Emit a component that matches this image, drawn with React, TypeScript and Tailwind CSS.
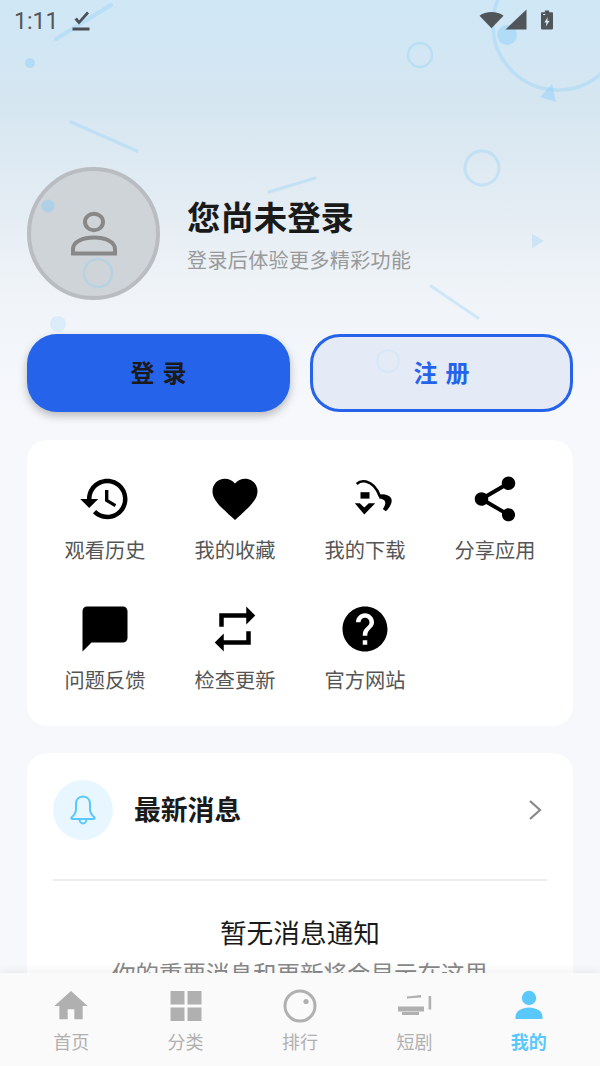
import React from 'react';

const CJK = { fontFamily: '"Noto Sans CJK SC", "Noto Sans", sans-serif' };

function MdIcon({ d }: { d: string }) {
    return (
        <svg viewBox="0 0 24 24" className="w-[54px] h-[54px]" fill="#000">
            <path d={d} />
        </svg>
    );
}

function DownloadIcon() {
    return (
        <svg viewBox="0 0 54 54" className="w-[54px] h-[54px]" fill="#000">
            <path d="M18.7 12C21 9.8 24.6 8.8 28 9.6C33 10.8 38.5 15 42 24.5" fill="none" stroke="#000" strokeWidth="2.6" />
            <path d="M40.5 22.8C45 21.6 50.5 22.4 53 26C55 29.4 52.5 35.2 47.8 39.2L44.8 37C47.4 33.5 48 30 46.4 28.6C45 27.2 43 26.6 41.5 26.8Z" />
            <rect x="22.5" y="20.2" width="9" height="6.4" />
            <path d="M16.8 31.2H21.8L26.3 35.6L30.8 31.2H37.2L26.3 42.6Z" />
        </svg>
    );
}

const gridItems: { label: string; icon: React.ReactNode }[] = [
    {
        label: '观看历史',
        icon: <MdIcon d="M13 3c-4.97 0-9 4.03-9 9H1l3.89 3.89.07.14L9 12H6c0-3.87 3.13-7 7-7s7 3.13 7 7-3.13 7-7 7c-1.93 0-3.68-.79-4.94-2.06l-1.42 1.42C8.27 19.99 10.51 21 13 21c4.97 0 9-4.03 9-9s-4.03-9-9-9zm-1 5v5l4.28 2.54.72-1.21-3.5-2.08V8H12z" />,
    },
    {
        label: '我的收藏',
        icon: <MdIcon d="M12 21.35l-1.45-1.32C5.4 15.36 2 12.28 2 8.5 2 5.42 4.42 3 7.5 3c1.74 0 3.41.81 4.5 2.09C13.09 3.81 14.76 3 16.5 3 19.58 3 22 5.42 22 8.5c0 3.78-3.4 6.86-8.55 11.54L12 21.35z" />,
    },
    { label: '我的下载', icon: <DownloadIcon /> },
    {
        label: '分享应用',
        icon: <MdIcon d="M18 16.08c-.76 0-1.44.3-1.96.77L8.91 12.7c.05-.23.09-.46.09-.7s-.04-.47-.09-.7l7.05-4.11c.54.5 1.25.81 2.04.81 1.66 0 3-1.34 3-3s-1.34-3-3-3-3 1.34-3 3c0 .24.04.47.09.7L8.04 9.81C7.5 9.31 6.79 9 6 9c-1.66 0-3 1.34-3 3s1.34 3 3 3c.79 0 1.5-.31 2.04-.81l7.12 4.16c-.05.21-.08.43-.08.65 0 1.61 1.31 2.92 2.92 2.92 1.61 0 2.92-1.31 2.92-2.92s-1.31-2.92-2.92-2.92z" />,
    },
    {
        label: '问题反馈',
        icon: <MdIcon d="M20 2H4c-1.1 0-1.99.9-1.99 2L2 22l4-4h14c1.1 0 2-.9 2-2V4c0-1.1-.9-2-2-2z" />,
    },
    {
        label: '检查更新',
        icon: <MdIcon d="M7 7h10v3l4-4-4-4v3H5v6h2V7zm10 10H7v-3l-4 4 4 4v-3h12v-6h-2v4z" />,
    },
    {
        label: '官方网站',
        icon: <MdIcon d="M12 2C6.48 2 2 6.48 2 12s4.48 10 10 10 10-4.48 10-10S17.52 2 12 2zm1 17h-2v-2h2v2zm2.07-7.75l-.9.92C13.45 12.9 13 13.5 13 15h-2v-.5c0-1.1.45-2.1 1.17-2.83l1.24-1.26c.37-.36.59-.86.59-1.41 0-1.1-.9-2-2-2s-2 .9-2 2H8c0-2.21 1.79-4 4-4s4 1.79 4 4c0 .88-.36 1.68-.93 2.25z" />,
    },
];

const navItems: { label: string; active?: boolean; icon: React.ReactNode }[] = [
    {
        label: '首页',
        icon: (
            <svg viewBox="0 0 24 24" className="w-10 h-10" fill="#b0b0b0">
                <path d="M10 20v-6h4v6h5v-8h3L12 3 2 12h3v8z" />
            </svg>
        ),
    },
    {
        label: '分类',
        icon: (
            <svg viewBox="0 0 40 40" className="w-10 h-10" fill="#b0b0b0">
                <rect x="4.5" y="5" width="14" height="13.5" />
                <rect x="21.5" y="5" width="14" height="13.5" />
                <rect x="4.5" y="21.5" width="14" height="13.5" />
                <rect x="21.5" y="21.5" width="14" height="13.5" />
            </svg>
        ),
    },
    {
        label: '排行',
        icon: (
            <svg viewBox="0 0 40 40" className="w-10 h-10">
                <circle cx="20" cy="20" r="15" fill="none" stroke="#b0b0b0" strokeWidth="3" />
                <circle cx="26" cy="15.5" r="2.6" fill="#b0b0b0" />
            </svg>
        ),
    },
    {
        label: '短剧',
        icon: (
            <svg viewBox="0 0 40 40" className="w-10 h-10" fill="#b0b0b0">
                <path d="M13 10.5L27 9V11.5L13 12.5Z" />
                <rect x="34.6" y="10" width="2.6" height="13.5" />
                <rect x="4" y="20.5" width="26" height="5" />
                <rect x="8" y="26" width="17" height="3" />
            </svg>
        ),
    },
    {
        label: '我的',
        active: true,
        icon: (
            <svg viewBox="0 0 40 40" className="w-10 h-10" fill="#5ac8fa">
                <circle cx="20" cy="12" r="7.2" />
                <path d="M6.5 33V31C6.5 25 13 21.5 20 21.5S33.5 25 33.5 31V33Z" />
            </svg>
        ),
    },
];

function Decorations() {
    return (
        <svg viewBox="0 0 600 400" className="absolute top-0 left-0 w-[600px] h-[400px] z-10 pointer-events-none" fill="none">
            <g stroke="#87cefa" strokeOpacity="0.32" strokeLinecap="round">
                <line x1="56" y1="39" x2="111" y2="5" strokeWidth="4" />
                <line x1="71" y1="122" x2="137" y2="151" strokeWidth="3.5" />
                <line x1="269" y1="192" x2="315" y2="178" strokeWidth="3" />
                <line x1="431" y1="286" x2="478" y2="318" strokeWidth="3" />
                <circle cx="420" cy="55" r="12" strokeWidth="2.5" />
                <circle cx="558" cy="25" r="65" strokeWidth="3.5" />
                <circle cx="482" cy="168" r="17" strokeWidth="3" />
                <circle cx="98" cy="273" r="14" strokeWidth="2.5" />
            </g>
            <circle cx="388" cy="361" r="11" stroke="#87cefa" strokeOpacity="0.12" strokeWidth="2" />
            <g fill="#87cefa" fillOpacity="0.45">
                <circle cx="30" cy="63" r="5" />
                <circle cx="507" cy="35" r="10" />
                <circle cx="48" cy="206" r="6.5" />
            </g>
            <circle cx="58" cy="324" r="8" fill="#87cefa" fillOpacity="0.2" />
            <path d="M552 84L540 97L556 102Z" fill="#87cefa" fillOpacity="0.42" />
            <path d="M532 234V248L544 241Z" fill="#87cefa" fillOpacity="0.3" />
        </svg>
    );
}

function StatusBar() {
    return (
        <div className="relative z-20 flex items-center justify-between h-[41px] pl-[14px] pr-[47px] text-[#555555]">
            <div className="flex items-center gap-[14px]">
                <span className="text-[23px] leading-none pt-[2px]" style={{ fontFamily: 'Roboto, sans-serif' }}>1:11</span>
                <svg viewBox="0 0 18 20" className="w-[18px] h-[20px]" fill="#4a4f55">
                    <path d="M2.5 8.5L5 6.5L7 9.5L15 0.5L17 2.5L7 13.5Z" />
                    <rect x="0.5" y="16.5" width="17" height="3" />
                </svg>
            </div>
            <div className="flex items-center gap-[1px] pb-[2px]">
                <svg viewBox="0 0 26 18" className="w-[25px] h-[18px]" fill="#50555a">
                    <path d="M0.5 4.5C7 -0.5 19 -0.5 25.5 4.5L13 17.5Z" />
                </svg>
                <svg viewBox="0 0 22 21" className="w-[22px] h-[21px]" fill="#50555a">
                    <path d="M21.5 0.5V20.5H0.5Z" />
                </svg>
                <svg viewBox="0 0 14 22" className="w-[12px] h-[22px] ml-[13px]" fill="#50555a">
                    <path d="M4.5 0H9.5V2H13C13.5 2 14 2.5 14 3V21C14 21.5 13.5 22 13 22H1C0.5 22 0 21.5 0 21V3C0 2.5 0.5 2 1 2H4.5Z" />
                    <path d="M7.8 7.5L4 14H6.4L5.6 19L10 11.8H7.4Z" fill="#dbeaf4" />
                    <rect x="2.5" y="4" width="2.5" height="1.2" fill="#dbeaf4" />
                </svg>
            </div>
        </div>
    );
}

export default function App() {
    return (
        <div
            className="relative w-[600px] h-[1066px] overflow-hidden bg-[linear-gradient(180deg,#cfe7f6_0px,#d5e6f1_100px,#e3ecf3_200px,#f0f4f8_300px,#f6f8fc_420px)]"
            style={CJK}
        >
            <StatusBar />
            <Decorations />

            <div className="flex items-center gap-[27px] pl-[27px] mt-[126px]">
                <div className="flex items-center justify-center w-[133px] h-[133px] rounded-full bg-[#cfd4d9] border-[4px] border-[#b9bdc1] shrink-0">
                    <svg viewBox="0 0 46 46" className="w-[46px] h-[46px]" fill="none" stroke="#888888" strokeWidth="4">
                        <ellipse cx="23" cy="11" rx="9" ry="8.3" />
                        <path d="M2 42.5V38C2 30.5 12 26.5 23 26.5S44 30.5 44 38V42.5Z" />
                    </svg>
                </div>
                <div className="flex flex-col">
                    <div className="text-[33.4px] leading-[42px] font-bold text-[#1a1a1a]">您尚未登录</div>
                    <div className="text-[20px] leading-[26px] tracking-[0.4px] text-[#999999] mt-[10px]">登录后体验更多精彩功能</div>
                </div>
            </div>

            <div className="flex justify-between px-[27px] mt-[34px]">
                <button className="w-[263px] h-[78px] pb-[3px] rounded-[30px] bg-[#2563eb] text-[24px] font-bold text-[#1a1a1a] tracking-[8px] shadow-[0_4px_8px_rgba(0,0,0,0.25)]">
                    <span className="pl-[8px]">登录</span>
                </button>
                <button className="w-[263px] h-[78px] pb-[3px] rounded-[30px] border-[3px] border-[#2563eb] bg-[#e4ebf7] text-[24px] font-bold text-[#2563eb] tracking-[8px]">
                    <span className="pl-[8px]">注册</span>
                </button>
            </div>

            <div className="mt-[28px] mx-[27px] bg-white rounded-[20px] h-[286px] px-[13px] pt-[32px] grid grid-cols-4 auto-rows-[130px]">
                {gridItems.map((item) => (
                    <div key={item.label} className="flex flex-col items-center">
                        {item.icon}
                        <span className="text-[20.2px] leading-[28px] text-[#555555] mt-[10px]">{item.label}</span>
                    </div>
                ))}
            </div>

            <div className="mt-[27px] mx-[27px] bg-white rounded-t-[20px] px-[26px] pt-[27px]">
                <div className="flex items-center h-[60px]">
                    <div className="flex items-center justify-center w-[60px] h-[60px] rounded-full bg-[#e8f7ff]">
                        <svg viewBox="0 0 26 30" className="w-[26px] h-[30px]" fill="none" stroke="#5ac8fa" strokeWidth="2" strokeLinejoin="round">
                            <path d="M13 1.5C8.5 1.5 6 5 6 9V14C6 17.5 4.5 20 1.5 22.5C1 23.2 1.3 24 2 24H24C24.7 24 25 23.2 24.5 22.5C21.5 20 20 17.5 20 14V9C20 5 17.5 1.5 13 1.5Z" />
                            <path d="M9.5 24C9.5 26.5 11 28.5 13 28.5S16.5 26.5 16.5 24" />
                        </svg>
                    </div>
                    <span className="ml-[21px] pb-[2px] text-[26.8px] leading-none font-bold text-[#1a1a1a]">最新消息</span>
                    <svg viewBox="0 0 14 20" className="ml-auto mr-[5px] w-[14px] h-[20px]" fill="none" stroke="#888888" strokeWidth="2.2">
                        <path d="M2 1L12 10L2 19" />
                    </svg>
                </div>
                <div className="h-[2px] bg-[#eeeeee] mt-[39px]" />
                <div className="text-center text-[26.7px] leading-[36px] text-[#1a1a1a] mt-[33px]">暂无消息通知</div>
                <div className="text-center text-[23.5px] leading-[32px] text-[#888888] mt-[7px]">你的重要消息和更新将会显示在这里</div>
            </div>

            <div className="absolute left-0 right-0 bottom-0 z-20 h-[93px] bg-[#fafafa] shadow-[0_-3px_8px_rgba(0,0,0,0.05)] flex pl-[14px] pr-[14px] pt-[13px]">
                {navItems.map((item) => (
                    <div key={item.label} className="flex-1 flex flex-col items-center">
                        {item.icon}
                        <span className={`text-[18px] leading-[24px] mt-[3px] ${item.active ? 'font-bold text-[#5ac8fa]' : 'text-[#b0b0b0]'}`}>
                            {item.label}
                        </span>
                    </div>
                ))}
            </div>
        </div>
    );
}
